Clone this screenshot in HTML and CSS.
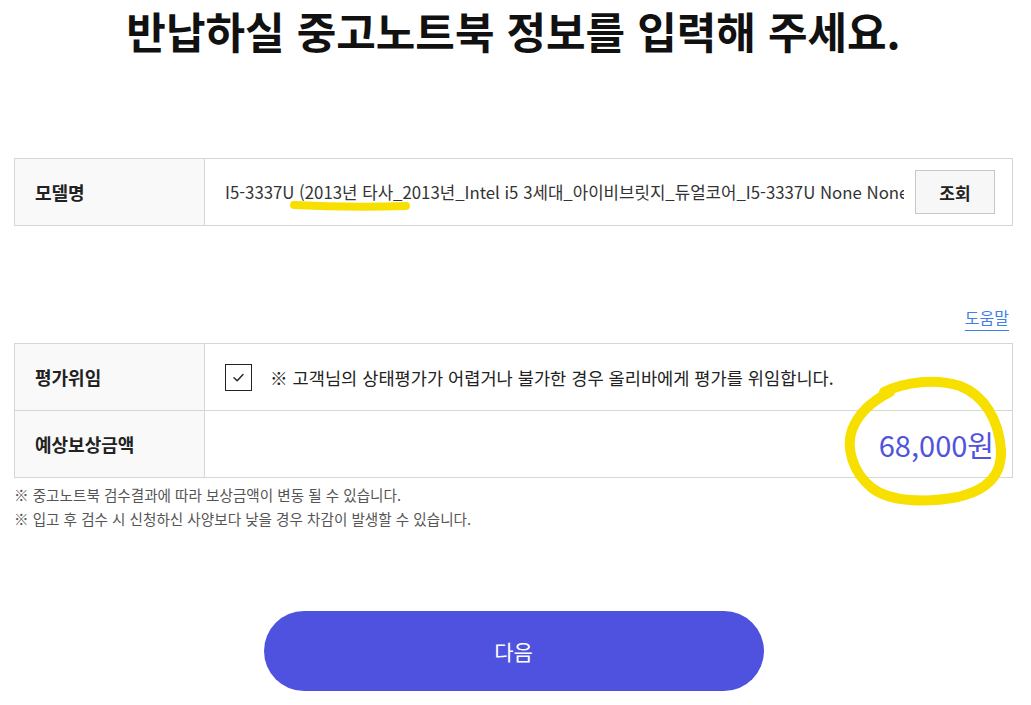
FILE: index.html
```html
<!DOCTYPE html>
<html lang="ko">
<head>
    <meta charset="UTF-8">
    <meta name="viewport" content="width=device-width, initial-scale=1.0">
    <title>중고노트북 정보 입력</title>
    <link rel="stylesheet" href="styles.css">
</head>
<body>
    <div class="page">
        <h1 class="title">반납하실 중고노트북 정보를 입력해 주세요.</h1>

        <div class="form-table model-table">
            <div class="row">
                <div class="label">모델명</div>
                <div class="cell model-cell">
                    <input class="model-input" type="text" readonly value="I5-3337U (2013년 타사_2013년_Intel i5 3세대_아이비브릿지_듀얼코어_I5-3337U None None">
                    <button class="lookup-btn">조회</button>
                </div>
            </div>
        </div>

        <div class="help-row">
            <a href="#" class="help-link">도움말</a>
        </div>

        <div class="form-table">
            <div class="row">
                <div class="label">평가위임</div>
                <div class="cell">
                    <label class="check">
                        <span class="check-box">
                            <svg width="17" height="17" viewBox="0 0 17 17"><path d="M4 8.8 L7.2 11.8 L13 5.6" fill="none" stroke="#222" stroke-width="1.4" stroke-linecap="round" stroke-linejoin="round"/></svg>
                        </span>
                        <span class="check-text">※ 고객님의 상태평가가 어렵거나 불가한 경우 올리바에게 평가를 위임합니다.</span>
                    </label>
                </div>
            </div>
            <div class="row">
                <div class="label">예상보상금액</div>
                <div class="cell price-cell">
                    <span class="price">68,000원</span>
                </div>
            </div>
        </div>

        <ul class="notes">
            <li>※ 중고노트북 검수결과에 따라 보상금액이 변동 될 수 있습니다.</li>
            <li>※ 입고 후 검수 시 신청하신 사양보다 낮을 경우 차감이 발생할 수 있습니다.</li>
        </ul>

        <div class="actions">
            <button class="next-btn">다음</button>
        </div>

        <!-- marker scribbles on the screenshot -->
        <svg class="marks" width="1031" height="705" viewBox="0 0 1031 705">
            <path d="M294 205 Q350 208 406 206" fill="none" stroke="#f7e000" stroke-width="8" stroke-linecap="round"/>
            <path d="M884 392 C905 382 935 378 960 386 C984 395 999 420 1001 450 C1002 475 988 490 958 497 C926 503 890 502 872 488 C852 472 846 447 852 430 C858 414 870 402 890 392" fill="none" stroke="#f7e000" stroke-width="10" stroke-linecap="round"/>
        </svg>
    </div>
</body>
</html>
```

FILE: styles.css
```css
* {
    box-sizing: border-box;
}
body {
    margin: 0;
    background: #ffffff;
    color: #222;
    font-family: "Noto Sans CJK KR", "Noto Sans", sans-serif;
}
.page {
    position: relative;
    width: 1031px;
    height: 705px;
    padding: 0 18px 0 14px;
    overflow: hidden;
}
.title {
    margin: 0;
    text-align: center;
    font-size: 43px;
    line-height: 60px;
    font-weight: 700;
    color: #111;
}
.form-table {
    border: 1px solid #d6d6d6;
    border-bottom: none;
}
.model-table {
    margin-top: 98px;
}
.row {
    display: grid;
    grid-template-columns: 190px 1fr;
    height: 67px;
    border-bottom: 1px solid #d6d6d6;
}
.label {
    display: flex;
    align-items: center;
    padding-left: 20px;
    background: #f9f9f9;
    border-right: 1px solid #d6d6d6;
    font-size: 18px;
    font-weight: 700;
    color: #222;
}
.cell {
    display: flex;
    align-items: center;
    padding: 0 18px 0 20px;
    min-width: 0;
}
.model-cell {
    gap: 11px;
    padding-right: 17px;
}
.model-input {
    flex: 1;
    min-width: 0;
    border: none;
    outline: none;
    padding: 0;
    font-family: inherit;
    font-size: 16.8px;
    color: #333;
    background: transparent;
}
.lookup-btn {
    width: 80px;
    height: 44px;
    border: 1px solid #c8c8c8;
    background: #f7f7f7;
    font-family: inherit;
    font-size: 17px;
    font-weight: 700;
    color: #222;
    cursor: pointer;
}
.help-row {
    display: flex;
    justify-content: flex-end;
    margin-top: 79px;
    margin-bottom: 14px;
    padding-right: 4px;
}
.help-link {
    font-size: 16px;
    line-height: 24px;
    color: #3f7fe8;
    text-decoration: underline;
    text-underline-offset: 6px;
}
.check {
    display: flex;
    align-items: center;
    gap: 18px;
}
.check-box {
    display: flex;
    align-items: center;
    justify-content: center;
    width: 27px;
    height: 27px;
    border: 1px solid #222;
    background: #fff;
}
.check-text {
    font-size: 17.6px;
    color: #222;
}
.price-cell {
    justify-content: flex-end;
}
.price {
    font-size: 29px;
    color: #5053dd;
}
.notes {
    list-style: none;
    margin: 5px 0 0;
    padding: 0;
    font-size: 14.6px;
    line-height: 24px;
    color: #555;
}
.actions {
    display: flex;
    justify-content: center;
    margin-top: 80px;
}
.next-btn {
    width: 500px;
    height: 80px;
    border: none;
    border-radius: 40px;
    background: #4e52df;
    color: #fff;
    font-family: inherit;
    font-size: 21px;
    cursor: pointer;
}
.marks {
    position: absolute;
    left: 0;
    top: 0;
    pointer-events: none;
}
```
